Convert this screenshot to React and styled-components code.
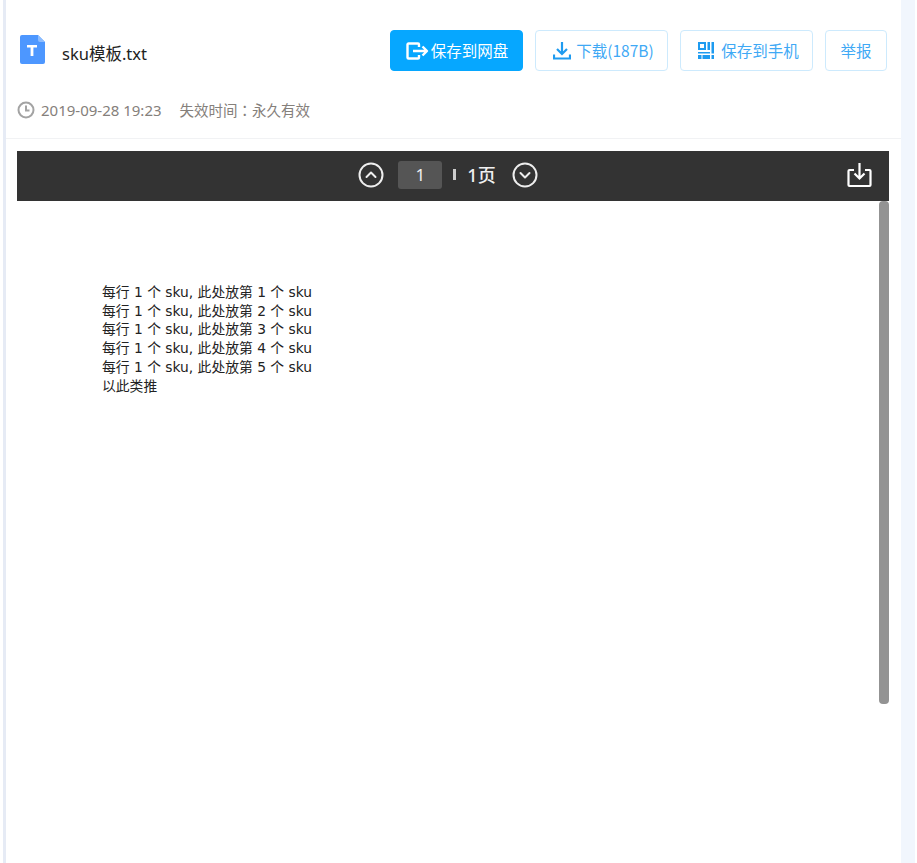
import React from "react";
import styled, { createGlobalStyle } from "styled-components";

const GlobalStyle = createGlobalStyle`
	html, body {
		margin: 0;
		padding: 0;
		background: #fff;
	}
	body {
		font-family: "Noto Sans", "Noto Sans CJK SC", sans-serif;
	}
`;

// page frame
const Page = styled.div`
	width: 917px;
	height: 863px;
	overflow: hidden;
	padding: 0 2px 0 3px;
	box-sizing: border-box;
	display: flex;
`;

const Shell = styled.div`
	flex: 1;
	display: flex;
	background: #f1f6fd;
	border-left: 3px solid #e6ebf5;
	padding-right: 14px;
	min-width: 0;
`;

const Card = styled.div`
	flex: 1;
	display: flex;
	flex-direction: column;
	background: #fff;
	min-width: 0;
`;

// header
const Header = styled.div`
	height: 139px;
	box-sizing: border-box;
	border-bottom: 1px solid #f1f2f4;
	padding: 30px 14px 0 11px;
`;

const TopRow = styled.div`
	display: flex;
	align-items: center;
	height: 41px;
`;

const FileIcon = styled.svg`
	width: 25px;
	height: 29px;
	margin: -3px 0 0 3px;
	flex-shrink: 0;
`;

const FileName = styled.div`
	flex: 1;
	margin-left: 17px;
	font-size: 16.5px;
	color: #222;
	line-height: 41px;
	padding-top: 3px;
	box-sizing: border-box;
	height: 41px;
`;

const Actions = styled.div`
	display: flex;
	gap: 12px;
`;

const Button = styled.button`
	width: ${(p) => p.$width}px;
	height: 41px;
	box-sizing: border-box;
	display: flex;
	align-items: center;
	justify-content: center;
	gap: ${(p) => p.$gap || 0}px;
	padding: 0 0 2px ${(p) => p.$shift || 0}px;
	border-radius: 4px;
	border: 1px solid ${(p) => (p.$primary ? "#06a7ff" : "#cdeafd")};
	background: ${(p) => (p.$primary ? "#06a7ff" : "#fff")};
	color: ${(p) => (p.$primary ? "#fff" : "#3fa9f5")};
	font-family: "Noto Sans CJK SC", sans-serif;
	font-size: 15.5px;
	white-space: nowrap;
`;

const ButtonIcon = styled.svg`
	width: ${(p) => p.$w}px;
	height: ${(p) => p.$h}px;
	margin-top: 2px;
	flex-shrink: 0;
`;

const Meta = styled.div`
	display: flex;
	align-items: center;
	margin-top: 27px;
	font-size: 15px;
	color: #85807b;
	line-height: 24px;
`;

const ClockIcon = styled.svg`
	width: 18px;
	height: 18px;
	margin-right: 6px;
	flex-shrink: 0;
`;

const Expiry = styled.span`
	margin-left: 18px;
	font-family: "Noto Sans CJK TC", sans-serif;
	font-size: 14.5px;
`;

// viewer
const Viewer = styled.div`
	flex: 1;
	margin: 12px 12px 0 11px;
	display: flex;
	flex-direction: column;
	min-height: 0;
`;

const Toolbar = styled.div`
	height: 50px;
	flex-shrink: 0;
	position: relative;
	background: #333;
	display: flex;
	align-items: center;
	justify-content: center;
	color: #eee;
	padding: 0 10px 2px 0;
	box-sizing: border-box;
`;

const RoundIcon = styled.svg`
	width: 26px;
	height: 26px;
	flex-shrink: 0;
`;

const PageInput = styled.div`
	width: 44px;
	height: 28px;
	margin-left: 14px;
	border-radius: 3px;
	background: #555;
	color: #eee;
	font-size: 17px;
	line-height: 28px;
	text-align: center;
`;

const Separator = styled.div`
	width: 3px;
	height: 11px;
	margin: -2px 0 0 11px;
	background: #ccc;
`;

const PageCount = styled.div`
	margin: 0 16px 2px 11px;
	font-size: 18px;
	font-weight: 500;
	color: #f0f0f0;
`;

const SaveIcon = styled.svg`
	position: absolute;
	right: 17px;
	top: 11px;
	width: 25px;
	height: 26px;
`;

const DocArea = styled.div`
	flex: 1;
	position: relative;
	min-height: 0;
	padding: 82px 0 0 85px;
	box-sizing: border-box;
`;

const DocLine = styled.div`
	font-family: "DejaVu Sans", "Noto Sans CJK SC", sans-serif;
	font-size: 13.8px;
	line-height: 18.7px;
	color: #222;
	white-space: pre;
`;

const ScrollThumb = styled.div`
	position: absolute;
	top: 0;
	right: 0;
	width: 10px;
	height: 503px;
	border-radius: 4px;
	background: #939393;
`;

const lines = [
	"每行 1 个 sku, 此处放第 1 个 sku",
	"每行 1 个 sku, 此处放第 2 个 sku",
	"每行 1 个 sku, 此处放第 3 个 sku",
	"每行 1 个 sku, 此处放第 4 个 sku",
	"每行 1 个 sku, 此处放第 5 个 sku",
	"以此类推",
];

export default function App() {
	return (
		<Page>
			<GlobalStyle />
			<Shell>
				<Card>
					<Header>
						<TopRow>
							<FileIcon viewBox="0 0 25 29">
								<path
									d="M2 0h16l7 7v20a2 2 0 0 1-2 2H2a2 2 0 0 1-2-2V2a2 2 0 0 1 2-2z"
									fill="#4d97ff"
								/>
								<path d="M18 0l7 7h-5a2 2 0 0 1-2-2z" fill="#8dbdff" />
								<path d="M7 10h10v2.6h-3.6V21h-2.8v-8.4H7z" fill="#fff" />
							</FileIcon>
							<FileName>sku模板.txt</FileName>
							<Actions>
								<Button $primary $width={133} $gap={2} $shift={1}>
									<ButtonIcon $w={23} $h={18} viewBox="0 0 23 18" fill="none" stroke="#fff" strokeWidth="2.4">
										<path d="M13 5V2.500a1 1 0 0 0-1-1H2.500a1 1 0 0 0-1 1v13a1 1 0 0 0 1 1H12a1 1 0 0 0 1-1V13" strokeLinejoin="round" />
										<path d="M7 9h14M16.500 4.500L21 9l-4.500 4.500" strokeLinejoin="round" />
									</ButtonIcon>
									保存到网盘
								</Button>
								<Button $width={133} $gap={5} $shift={4}>
									<ButtonIcon $w={18} $h={18} viewBox="0 0 18 18" fill="none" stroke="#1e9bf0" strokeWidth="2.2">
										<path d="M9 0v11.500M4 7l5 5 5-5" />
										<path d="M1 12.500v4h16v-4" />
									</ButtonIcon>
									下载(187B)
								</Button>
								<Button $width={133} $gap={7} $shift={4}>
									<ButtonIcon $w={16} $h={17} viewBox="0 0 16 17" fill="#1e9bf0">
										<path d="M0 0h8v8H0zm2 2v4h4V2z" fillRule="evenodd" />
										<path d="M9.500 0H12v8H9.500zM13.500 0H16v11.500h-2.500zM0 10h12v1.500H0zM0 13h3.500v4H0zM4.500 13H12v4H4.500zM13.500 13H16v4h-2.500z" />
									</ButtonIcon>
									保存到手机
								</Button>
								<Button $width={62}>举报</Button>
							</Actions>
						</TopRow>
						<Meta>
							<ClockIcon viewBox="0 0 18 18" fill="none" stroke="#a3a3a3" strokeWidth="2">
								<circle cx="9" cy="9" r="7.500" />
								<path d="M9 4.500v5h3.500" />
							</ClockIcon>
							2019-09-28 19:23
							<Expiry>失效时间：永久有效</Expiry>
						</Meta>
					</Header>
					<Viewer>
						<Toolbar>
							<RoundIcon viewBox="0 0 26 26" fill="none" stroke="#eee" strokeWidth="2">
								<circle cx="13" cy="13" r="11.500" />
								<path d="M8.500 15l4.500-4.500 4.500 4.500" strokeLinecap="round" strokeLinejoin="round" />
							</RoundIcon>
							<PageInput>1</PageInput>
							<Separator />
							<PageCount>1页</PageCount>
							<RoundIcon viewBox="0 0 26 26" fill="none" stroke="#eee" strokeWidth="2">
								<circle cx="13" cy="13" r="11.500" />
								<path d="M8.500 11l4.500 4.500 4.500-4.500" strokeLinecap="round" strokeLinejoin="round" />
							</RoundIcon>
							<SaveIcon viewBox="0 0 25 26" fill="none" stroke="#fff" strokeWidth="2.2">
								<path d="M7 8H2.500a1 1 0 0 0-1 1v14a1 1 0 0 0 1 1h20a1 1 0 0 0 1-1V9a1 1 0 0 0-1-1H18" strokeLinejoin="round" />
								<path d="M12.500 1v15M7.500 11.500l5 5 5-5" />
							</SaveIcon>
						</Toolbar>
						<DocArea>
							{lines.map((line) => (
								<DocLine key={line}>{line}</DocLine>
							))}
							<ScrollThumb />
						</DocArea>
					</Viewer>
				</Card>
			</Shell>
		</Page>
	);
}
